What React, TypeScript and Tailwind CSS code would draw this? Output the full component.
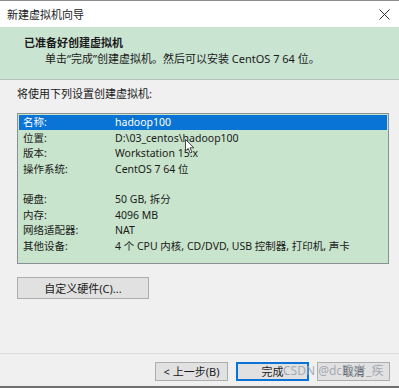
export default function App() {
  const rows = [
    { label: "名称:", value: "hadoop100" },
    { label: "位置:", value: "D:\\03_centos\\hadoop100" },
    { label: "版本:", value: "Workstation 15.x" },
    { label: "操作系统:", value: "CentOS 7 64 位" },
    { label: "", value: "" },
    { label: "硬盘:", value: "50 GB, 拆分" },
    { label: "内存:", value: "4096 MB" },
    { label: "网络适配器:", value: "NAT" },
    { label: "其他设备:", value: "4 个 CPU 内核, CD/DVD, USB 控制器, 打印机, 声卡" },
  ];

  return (
    <div className="relative w-[399px] h-[388px] flex flex-col bg-[#f0f0f0] border-t border-[#8c8c8c] overflow-hidden font-['Noto_Sans','Noto_Sans_CJK_SC',sans-serif] text-[11px] text-[#1a1a1a]">
      {/* Title bar */}
      <div className="h-[26px] shrink-0 bg-white flex items-center justify-between pl-[7px] pr-[9px]">
        <span className="text-[11px] leading-none">新建虚拟机向导</span>
        <svg width="11" height="11" viewBox="0 0 11 11" fill="none">
          <line x1="0.5" y1="0.5" x2="10.5" y2="10.5" stroke="#333" strokeWidth="1" />
          <line x1="10.5" y1="0.5" x2="0.5" y2="10.5" stroke="#333" strokeWidth="1" />
        </svg>
      </div>

      {/* Green header */}
      <div className="h-[53px] shrink-0 bg-[#cae4d2] border-b border-[#b3c2b8] pl-[24px] pt-[9px]">
        <div className="font-bold leading-[14px]">已准备好创建虚拟机</div>
        <div className="pl-[21px] mt-[2px] leading-[14px]">
          单击“完成”创建虚拟机。然后可以安装 CentOS 7 64 位。
        </div>
      </div>

      {/* Body */}
      <div className="flex-1 flex flex-col px-[17px] pt-[7px]">
        <div className="leading-[14px]">将使用下列设置创建虚拟机:</div>
        <div className="mt-[12px] h-[151px] border border-[#8a9096] bg-[#c8e4cc] p-[1px] w-[372px] text-[10.5px]">
          {rows.map((r, i) => (
            <div
              key={i}
              className={`h-[15.4px] flex items-center leading-none ${
                i === 0 ? "bg-[#0a74d6] text-white" : ""
              }`}
            >
              <span className="w-[96px] pl-[4px]">{r.label}</span>
              <span>{r.value}</span>
            </div>
          ))}
        </div>
        <button className="mt-[13px] w-[132px] h-[22px] bg-[#e1e1e1] border border-[#adadad] text-[11px] leading-none">
          自定义硬件(C)...
        </button>
      </div>

      {/* Footer */}
      <div className="h-[35px] shrink-0 border-t border-[#dcdcdc] border-b-2 border-b-[#6f6f6f] flex justify-end items-start gap-[8px] pt-[8px] pr-[9px]">
        <button className="w-[73px] h-[19px] bg-[#e1e1e1] border border-[#adadad] text-[11px] leading-none">
          &lt; 上一步(B)
        </button>
        <button className="w-[73px] h-[19px] bg-[#e1e1e1] border-2 border-[#0a74d6] text-[11px] leading-none">
          完成
        </button>
        <button className="w-[73px] h-[19px] bg-[#e1e1e1] border border-[#adadad] text-[11px] leading-none text-[#555]">
          取消
        </button>
      </div>

      {/* Mouse cursor */}
      <svg className="absolute left-[185px] top-[138px]" width="10" height="15" viewBox="0 0 10 15">
        <path d="M0.5 0.5 L0.5 12 L3.2 9.4 L5.2 14 L7 13.2 L5 8.8 L8.8 8.8 Z" fill="white" stroke="#333" strokeWidth="0.9" />
      </svg>

      {/* Watermark */}
      <div className="absolute left-[283px] top-[364px] text-[12px] leading-none text-[#9aa3ad]/90 whitespace-nowrap">
        CSDN @dc隐者_疾
      </div>
    </div>
  );
}
